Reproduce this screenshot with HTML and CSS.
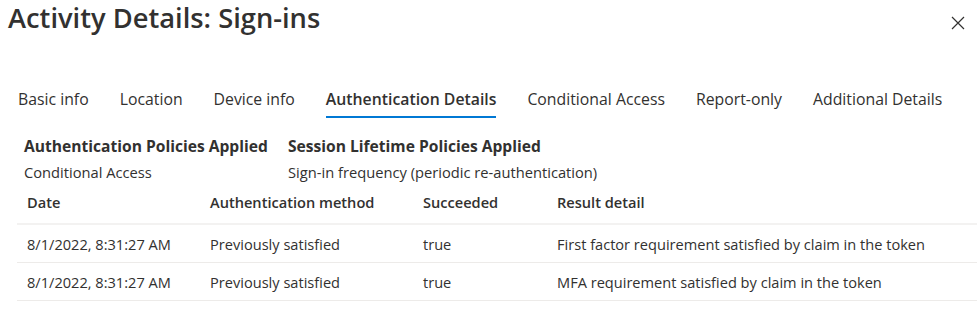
FILE: index.html
```html
<!DOCTYPE html>
<html lang="en">
<head>
    <meta charset="UTF-8">
    <title>Activity Details: Sign-ins</title>
    <link rel="stylesheet" href="styles.css">
</head>
<body>
    <div class="panel-header">
        <h1>Activity Details: Sign-ins</h1>
        <button class="close-button" aria-label="Close">
            <svg width="14" height="14" viewBox="0 0 14 14">
                <path d="M1 1 L13 13 M13 1 L1 13" stroke="#323130" stroke-width="1.2" fill="none"/>
            </svg>
        </button>
    </div>

    <div class="tabs">
        <span class="tab">Basic info</span>
        <span class="tab">Location</span>
        <span class="tab">Device info</span>
        <span class="tab active">Authentication Details</span>
        <span class="tab">Conditional Access</span>
        <span class="tab">Report-only</span>
        <span class="tab">Additional Details</span>
    </div>

    <div class="policies">
        <div class="policy-title">Authentication Policies Applied</div>
        <div class="policy-title">Session Lifetime Policies Applied</div>
        <div class="policy-value">Conditional Access</div>
        <div class="policy-value">Sign-in frequency (periodic re-authentication)</div>
    </div>

    <table class="auth-table">
        <thead>
            <tr>
                <th class="col-date">Date</th>
                <th class="col-method">Authentication method</th>
                <th class="col-ok">Succeeded</th>
                <th>Result detail</th>
            </tr>
        </thead>
        <tbody>
            <tr>
                <td>8/1/2022, 8:31:27 AM</td>
                <td>Previously satisfied</td>
                <td>true</td>
                <td>First factor requirement satisfied by claim in the token</td>
            </tr>
            <tr>
                <td>8/1/2022, 8:31:27 AM</td>
                <td>Previously satisfied</td>
                <td>true</td>
                <td>MFA requirement satisfied by claim in the token</td>
            </tr>
        </tbody>
    </table>
</body>
</html>
```

FILE: styles.css
```css
body {
    margin: 0;
    background: #ffffff;
    color: #323130;
    font-family: 'Open Sans', 'Noto Sans', sans-serif;
}

.panel-header {
    display: flex;
    justify-content: space-between;
    align-items: flex-start;
    padding: 0 12px 0 8px;
}

.panel-header h1 {
    margin: 0;
    font-size: 27.3px;
    font-weight: 600;
    line-height: 36px;
}

.close-button {
    border: none;
    background: none;
    padding: 0;
    margin-top: 16px;
    width: 14px;
    height: 14px;
    cursor: pointer;
}

.close-button svg {
    display: block;
}

.tabs {
    display: flex;
    gap: 31px;
    padding-left: 18px;
    margin-top: 52px;
    font-size: 15.8px;
}

.tab {
    line-height: 22px;
    padding-bottom: 6px;
    border-bottom: 2px solid transparent;
}

.tab.active {
    font-weight: 600;
    border-bottom-color: #0078d4;
}

.policies {
    display: grid;
    grid-template-columns: 264px auto;
    row-gap: 5px;
    padding-left: 24px;
    margin-top: 17px;
    font-size: 14.7px;
}

.policy-title {
    font-weight: 700;
    font-size: 15.6px;
    line-height: 22px;
}

.policy-value {
    line-height: 20px;
}

.auth-table {
    margin-left: 17px;
    width: 960px;
    border-collapse: collapse;
    font-size: 14.6px;
    margin-top: 2px;
}

.auth-table th {
    text-align: left;
    font-weight: 600;
    line-height: 20px;
    padding: 8px 10px 11px;
    border-bottom: 2px solid #f3f2f1;
}

.auth-table td {
    line-height: 20px;
    padding: 9px 10px 8px;
    border-bottom: 1px solid #edebe9;
}

.col-date {
    width: 163px;
}

.col-method {
    width: 193px;
}

.col-ok {
    width: 114px;
}
```
